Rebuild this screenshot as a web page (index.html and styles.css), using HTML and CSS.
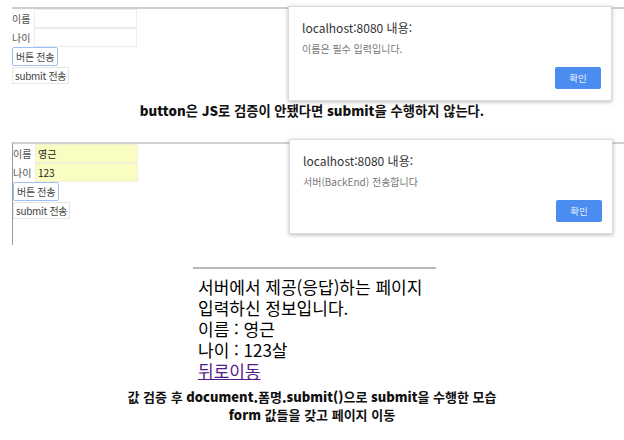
FILE: index.html
```html
<!DOCTYPE html>
<html lang="ko">
<head>
<meta charset="utf-8">
<link rel="stylesheet" href="styles.css">
</head>
<body>
<div class="shot shot-a">
  <form class="mini-form">
    <div class="row"><span class="lbl">이름</span><span class="inp"></span></div>
    <div class="row"><span class="lbl">나이</span><span class="inp"></span></div>
    <span class="btn btn-focus">버튼 전송</span>
    <span class="btn btn-submit">submit 전송</span>
  </form>
  <div class="dialog dialog-a">
    <div class="d-title">localhost:8080 내용:</div>
    <div class="d-msg">이름은 필수 입력입니다.</div>
    <div class="d-actions"><span class="d-ok">확인</span></div>
  </div>
</div>
<p class="caption cap-a"><b>button</b>은 <b>JS</b>로 검증이 안됐다면 <b>submit</b>을 수행하지 않는다.</p>

<div class="shot shot-b">
  <form class="mini-form">
    <div class="row"><span class="lbl">이름</span><span class="inp filled">영근</span></div>
    <div class="row"><span class="lbl">나이</span><span class="inp filled">123</span></div>
    <span class="btn btn-focus">버튼 전송</span>
    <span class="btn btn-submit">submit 전송</span>
  </form>
  <div class="dialog dialog-b">
    <div class="d-title">localhost:8080 내용:</div>
    <div class="d-msg">서버(BackEnd) 전송합니다</div>
    <div class="d-actions"><span class="d-ok">확인</span></div>
  </div>
</div>

<div class="result">
  <p>서버에서 제공(응답)하는 페이지</p>
  <p>입력하신 정보입니다.</p>
  <p>이름 : 영근</p>
  <p>나이 : 123살</p>
  <p><a href="#" class="back">뒤로이동</a></p>
</div>
<p class="caption cap-b">값 검증 후 <b>document.</b>폼명<b>.submit()</b>으로 <b>submit</b>을 수행한 모습<br><b>form</b> 값들을 갖고 페이지 이동</p>
</body>
</html>
```

FILE: styles.css
```css
* { box-sizing: border-box; }
body {
  margin: 0;
  background: #fff;
  font-family: "Noto Sans CJK KR", "Noto Sans", sans-serif;
  color: #000;
}
.shot {
  position: relative;
  margin-left: 12px;
  border-top: 2px solid #cfcfcf;
}
.shot-a {
  margin-top: 7px;
  height: 86px;
}
.shot-b {
  margin-top: 22px;
  height: 103px;
  border-left: 1px solid #9a9a9a;
}
.mini-form {
  display: flex;
  flex-direction: column;
  align-items: flex-start;
  font-size: 10px;
  color: #555;
}
.row {
  display: flex;
  align-items: center;
  height: 19px;
}
.lbl {
  width: 22px;
  line-height: 19px;
}
.inp {
  width: 103px;
  height: 19px;
  border: 1px solid #ececec;
  line-height: 17px;
  padding-left: 2px;
  color: #222;
}
.inp.filled {
  background: #fafdc2;
  border-color: #f0f0d8;
}
.btn {
  height: 19px;
  line-height: 17px;
  padding: 0 3px;
  border: 1px solid #e6e6e6;
  background: #fff;
  color: #444;
}
.btn-focus {
  border: 1px solid #9cbff5;
  border-radius: 2px;
  margin-bottom: 1px;
  letter-spacing: -0.3px;
}
.btn-submit {
  height: 17px;
  line-height: 15px;
  padding: 0 2px;
  letter-spacing: -0.3px;
}
.dialog {
  position: absolute;
  width: 324px;
  background: #fff;
  border: 1px solid #dcdcdc;
  box-shadow: 0 1px 4px rgba(0, 0, 0, 0.28);
  padding: 13px 10px 0 13px;
}
.dialog-a {
  left: 276px;
  top: -3px;
  height: 95px;
}
.dialog-b {
  left: 276px;
  top: -5px;
  height: 95px;
}
.d-title {
  font-size: 12px;
  color: #333;
  line-height: 16px;
}
.d-msg {
  font-size: 10px;
  color: #777;
  line-height: 14px;
  margin-top: 6px;
}
.d-actions {
  display: flex;
  justify-content: flex-end;
  margin-top: 11px;
}
.d-ok {
  width: 46px;
  height: 22px;
  border-radius: 2px;
  background: #4a8cf0;
  color: #e8f0ff;
  font-size: 9.5px;
  line-height: 22px;
  text-align: center;
}
.caption {
  margin: 0;
  text-align: center;
  line-height: 18px;
  color: #111;
  font-weight: 700;
}
.cap-a {
  margin-top: 9px;
  font-size: 13.3px;
}
.cap-b {
  font-size: 13px;
  margin-top: 7px;
}
.result {
  margin: 22px 0 0 193px;
  width: 243px;
  border-top: 2px solid #b8b8b8;
  padding: 7px 0 0 5px;
  font-size: 17px;
  line-height: 21px;
}
.result p { margin: 0; }
.back { color: #551a8b; }
```
